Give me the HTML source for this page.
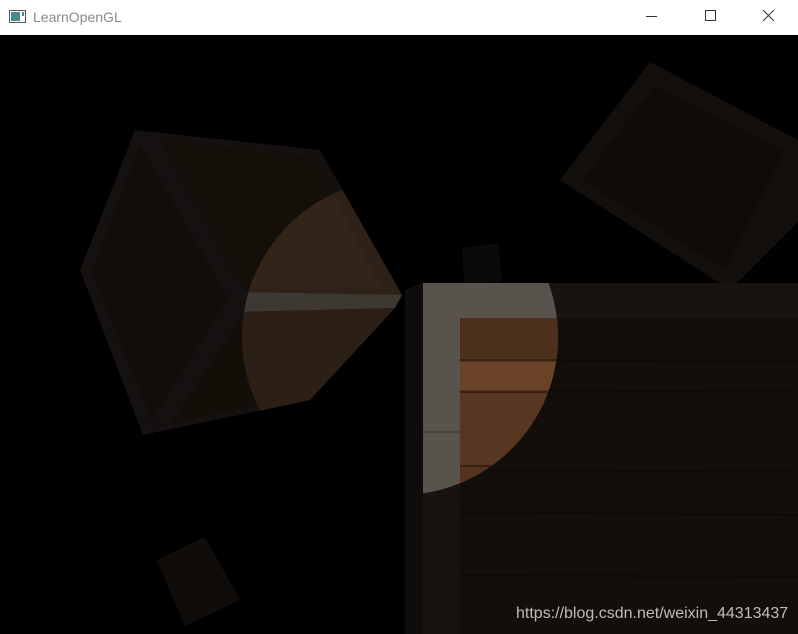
<!DOCTYPE html>
<html><head><style>
html,body{margin:0;padding:0;width:798px;height:634px;overflow:hidden;background:#000;font-family:"Liberation Sans",sans-serif}
.tb{position:absolute;left:0;top:0;width:798px;height:35px;background:#fff}
.tb .t{position:absolute;left:33px;top:9px;font-size:14px;color:#8a8a8a}
.scene{position:absolute;left:0;top:35px}
.wm{position:absolute;left:516px;top:605px;font-size:16px;color:#bdbdbd}
</style></head><body>
<div class="tb">
<svg width="798" height="35" style="position:absolute;left:0;top:0">
<rect x="9.5" y="10.5" width="16" height="12" fill="#fff" stroke="#555"/>
<rect x="11" y="12" width="9" height="9" fill="#4a8a8a"/>
<rect x="22" y="12" width="2" height="4" fill="#4a8a8a"/>
<line x1="646" y1="16.5" x2="657" y2="16.5" stroke="#333"/>
<rect x="705.5" y="10.5" width="10" height="10" fill="none" stroke="#333"/>
<path d="M763 10 L774 21 M774 10 L763 21" stroke="#333"/>
</svg>
<div class="t">LearnOpenGL</div>
</div>
<svg class="scene" width="798" height="599" viewBox="0 35 798 599">
<defs>
<clipPath id="spot"><circle cx="400" cy="337" r="158"/></clipPath>
</defs>
<rect x="0" y="35" width="798" height="599" fill="#000"/>
<polygon points="560,180 650,62 798,140 798,222 730,290" fill="#120f0c"/>
<polygon points="582,180 655,85 785,150 725,270" fill="#0f0b08"/>
<polygon points="157,560 205,537 240,600 185,626" fill="#100c09"/>
<polygon points="462,248 498,243 502,282 464,284" fill="#0c0a08"/>
<polygon points="135,130 320,150 402,295 310,400 143,435 80,270" fill="#141110"/>
<polygon points="160,140 315,158 385,290 245,292" fill="#150f0a"/>
<polygon points="250,305 385,302 305,392 170,425" fill="#140e09"/>
<polygon points="92,272 140,145 228,298 152,420" fill="#110d09"/>
<polygon points="405,290 423,283 423,634 405,634" fill="#0f0d0b"/>
<rect x="423" y="283" width="375" height="351" fill="#161310"/>
<rect x="460" y="318" width="338" height="316" fill="#140e0a"/>
<g stroke="#0a0604" stroke-width="2" opacity=".6">
<line x1="460" y1="360" x2="798" y2="362"/><line x1="460" y1="390" x2="798" y2="392"/>
<line x1="460" y1="470" x2="798" y2="472"/><line x1="460" y1="512" x2="798" y2="515"/>
<line x1="460" y1="575" x2="798" y2="577"/>
</g>
<g clip-path="url(#spot)">
<polygon points="150,132 320,150 402,295 240,297" fill="#2e2218"/>
<polygon points="165,142 315,158 380,288 245,290" fill="#33241a"/>
<polygon points="240,292 402,295 395,308 240,312" fill="#3d3832"/>
<polygon points="240,312 395,308 310,400 160,432" fill="#2c2016"/>
<rect x="423" y="283" width="375" height="351" fill="#58534c"/>
<rect x="460" y="318" width="338" height="316" fill="#54341f"/>
<rect x="460" y="318" width="338" height="40" fill="#4c2f1c"/>
<rect x="460" y="362" width="338" height="28" fill="#6a4228"/>
<rect x="460" y="394" width="338" height="70" fill="#583722"/>
<g stroke="#2a1a0f" stroke-width="2" opacity=".7">
<line x1="460" y1="360" x2="798" y2="360"/><line x1="460" y1="392" x2="798" y2="392"/>
<line x1="460" y1="466" x2="798" y2="466"/>
</g>
<line x1="423" y1="432" x2="460" y2="432" stroke="#3a352f" stroke-width="2" opacity=".5"/>
</g>
</svg>
<div class="wm">https://blog.csdn.net/weixin_44313437</div>
</body></html>
